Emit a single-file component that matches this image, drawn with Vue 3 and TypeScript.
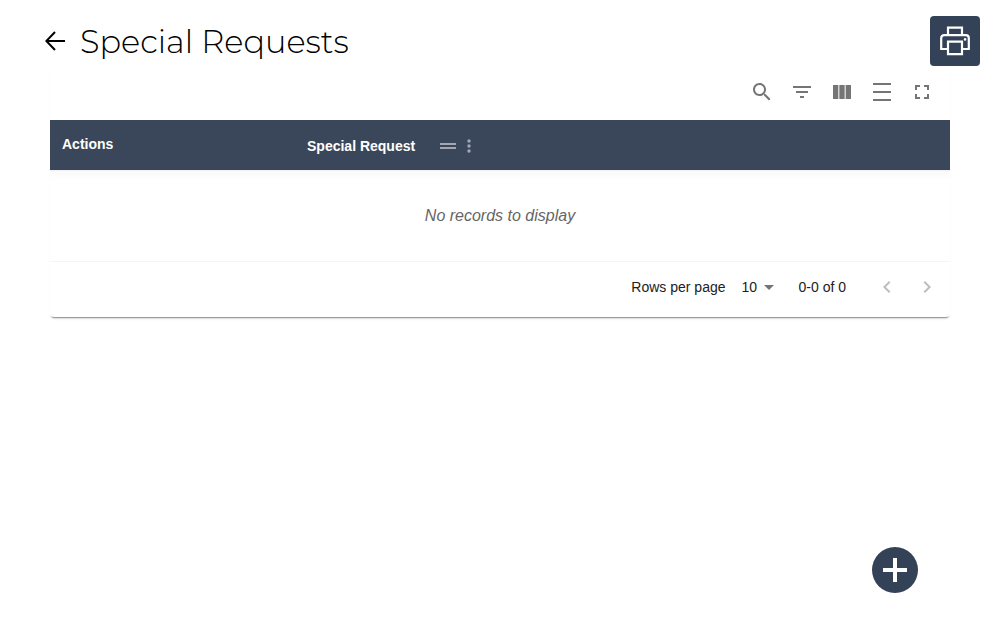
<script setup lang="ts">
import { ref } from 'vue'

interface Tool {
  label: string
  path: string
}

const tools: Tool[] = [
  {
    label: 'Search',
    path: 'M15.5 14h-.79l-.28-.27C15.41 12.59 16 11.11 16 9.5 16 5.91 13.09 3 9.5 3S3 5.91 3 9.5 5.91 16 9.5 16c1.61 0 3.09-.59 4.23-1.57l.27.28v.79l5 4.99L20.49 19l-4.99-5zm-6 0C7.01 14 5 11.99 5 9.5S7.01 5 9.5 5 14 7.01 14 9.5 11.99 14 9.5 14z',
  },
  { label: 'Filter', path: 'M10 18h4v-2h-4v2zM3 6v2h18V6H3zm3 7h12v-2H6v2z' },
  { label: 'Columns', path: 'M14.67 5v14H9.33V5h5.34zm1 14H21V5h-5.33v14zm-7.34 0V5H3v14h5.33z' },
  { label: 'Density', path: 'M3 3h18v2H3zM3 11h18v2H3zM3 19h18v2H3z' },
  {
    label: 'Full screen',
    path: 'M7 14H5v5h5v-2H7v-3zm-2-4h2V7h3V5H5v5zm12 7h-3v2h5v-5h-2v3zM14 5v2h3v3h2V5h-5z',
  },
]

const pageSizes: number[] = [10, 25, 50]
const pageSize = ref<number>(10)
</script>

<template>
  <div class="page">
    <header class="top">
      <button class="back" type="button" aria-label="Back">
        <svg viewBox="0 0 20 20" width="20" height="20">
          <path d="M10 1 1.3 10l8.7 9M1.3 10H20" fill="none" stroke="#000" stroke-width="2" />
        </svg>
      </button>
      <h1>Special Requests</h1>
      <button class="print" type="button" aria-label="Print">
        <svg viewBox="0 0 30 30" width="30" height="30" fill="none" stroke="#fff" stroke-width="2.2">
          <path d="M8 9V1.6h14V9M8 23H1.2V12.2q0-3 3-3h21.6q3 0 3 3V23H22" />
          <path d="M8 15.6h14v12.6H8z" />
          <circle cx="25.1" cy="13.4" r="1.3" fill="#fff" stroke="none" />
        </svg>
      </button>
    </header>

    <main class="paper">
      <div class="toolbar">
        <button v-for="tool in tools" :key="tool.label" type="button" :aria-label="tool.label">
          <svg viewBox="0 0 24 24" width="24" height="24"><path :d="tool.path" fill="#757575" /></svg>
        </button>
      </div>

      <table>
        <thead>
          <tr>
            <th class="actions" scope="col">Actions</th>
            <th scope="col">
              <div class="column-head">
                <span>Special Request</span>
                <button class="drag" type="button" aria-label="Move column">
                  <svg viewBox="0 0 16 8" width="16" height="8"><path d="M0 1h16v2H0zM0 5h16v2H0z" fill="#a1a8b2" /></svg>
                </button>
                <button class="more" type="button" aria-label="Column actions">
                  <svg viewBox="0 0 4 14" width="4" height="14" fill="#a1a8b2">
                    <circle cx="2" cy="2" r="1.7" /><circle cx="2" cy="7" r="1.7" /><circle cx="2" cy="12" r="1.7" />
                  </svg>
                </button>
              </div>
            </th>
          </tr>
        </thead>
        <tbody>
          <tr>
            <td class="empty" colspan="2">No records to display</td>
          </tr>
        </tbody>
      </table>

      <div class="pagination">
        <label for="page-size">Rows per page</label>
        <div class="select">
          <select id="page-size" v-model="pageSize">
            <option v-for="size in pageSizes" :key="size" :value="size">{{ size }}</option>
          </select>
          <svg viewBox="0 0 10 5" width="10" height="5"><path d="M0 0h10L5 5z" fill="#757575" /></svg>
        </div>
        <span class="range">0-0 of 0</span>
        <button type="button" aria-label="Previous page" disabled>
          <svg viewBox="0 0 24 24" width="24" height="24"><path d="M15.41 7.41 14 6l-6 6 6 6 1.41-1.41L10.83 12z" fill="#bdbdbd" /></svg>
        </button>
        <button type="button" aria-label="Next page" disabled>
          <svg viewBox="0 0 24 24" width="24" height="24"><path d="M10 6 8.59 7.41 13.17 12l-4.58 4.59L10 18l6-6z" fill="#bdbdbd" /></svg>
        </button>
      </div>
    </main>

    <button class="add" type="button" aria-label="Add special request">
      <svg viewBox="0 0 24 24" width="24" height="24"><path d="M10 0h4v10h10v4H14v10h-4V14H0v-4h10z" fill="#fff" /></svg>
    </button>
  </div>
</template>

<style>
body {
  margin: 0;
  background: #fff;
}
</style>

<style scoped>
.page {
  box-sizing: border-box;
  min-height: 100vh;
  padding: 16px 50px 32px;
  font-family: "Liberation Sans", Arial, sans-serif;
  font-size: 14px;
  color: #212121;
}
button {
  display: flex;
  align-items: center;
  justify-content: center;
  padding: 0;
  border: 0;
  background: none;
  cursor: pointer;
}
svg {
  display: block;
  flex: none;
}
.top {
  display: flex;
  align-items: center;
  height: 50px;
  margin: 0 -30px 0 -5px;
}
h1 {
  flex: 1;
  margin: 0 0 0 15px;
  padding-top: 2px;
  font-family: Montserrat, Inter, sans-serif;
  font-size: 32px;
  font-weight: 300;
  line-height: 48px;
  color: #000;
}
.print {
  width: 50px;
  height: 50px;
  border-radius: 4px;
  background: #334257;
}
.paper {
  border-radius: 4px;
  box-shadow: 0 2px 1px -1px rgba(0, 0, 0, 0.32), 0 3px 3px -2px rgba(0, 0, 0, 0.24);
}
.toolbar {
  display: flex;
  justify-content: flex-end;
  height: 54px;
  padding: 0 8px;
}
.toolbar button {
  width: 40px;
  height: 52px;
}
table {
  width: 100%;
  border-collapse: collapse;
}
thead {
  background: #3a475a;
  color: #fff;
}
th {
  box-sizing: border-box;
  height: 50px;
  padding: 0 12px;
  text-align: left;
  font-weight: 700;
  line-height: 20px;
}
.actions {
  width: 245px;
  padding-bottom: 2px;
}
.column-head {
  display: flex;
  align-items: center;
  padding-top: 2px;
}
.drag {
  margin-left: 25px;
}
.more {
  margin-left: 11px;
}
.empty {
  height: 90px;
  padding: 1px 0 0;
  border-bottom: 1px solid #f5f5f5;
  background: linear-gradient(#e8e8e8 0, #fafafa 1px, #fff 10px);
  text-align: center;
  font-size: 16px;
  font-style: italic;
  color: #666;
}
.pagination {
  display: flex;
  align-items: flex-start;
  justify-content: flex-end;
  height: 50px;
  padding: 5px 3px 0 0;
  line-height: 40px;
}
.select {
  display: flex;
  align-items: center;
  height: 40px;
  margin-left: 16px;
}
select {
  appearance: none;
  width: 22px;
  height: 40px;
  padding: 0 0 2px;
  border: 0;
  background: none;
  color: inherit;
  font: inherit;
}
.range {
  margin: 0 21px 0 25px;
}
.pagination button {
  width: 40px;
  height: 40px;
}
.add {
  position: fixed;
  right: 82px;
  bottom: 32px;
  width: 46px;
  height: 46px;
  border-radius: 50%;
  background: #334257;
}
</style>
